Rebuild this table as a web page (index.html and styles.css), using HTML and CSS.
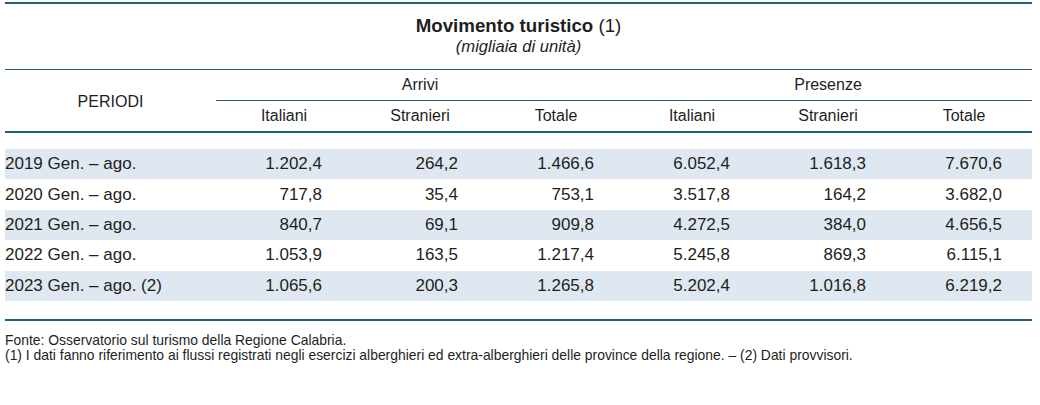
FILE: index.html
```html
<!DOCTYPE html>
<html lang="it">
<head>
<meta charset="utf-8">
<title>Movimento turistico</title>
<link rel="stylesheet" href="styles.css">
</head>
<body>
<div class="wrap">
  <div class="title-block">
    <div class="title"><b>Movimento turistico</b> (1)</div>
    <div class="subtitle">(migliaia di unità)</div>
  </div>
  <table class="data">
    <colgroup>
      <col class="c-first">
      <col class="c-num"><col class="c-num"><col class="c-num">
      <col class="c-num"><col class="c-num"><col class="c-num">
    </colgroup>
    <thead>
      <tr class="h1">
        <th rowspan="2" class="periodi">PERIODI</th>
        <th colspan="3" class="group">Arrivi</th>
        <th colspan="3" class="group">Presenze</th>
      </tr>
      <tr class="h2">
        <th>Italiani</th><th>Stranieri</th><th>Totale</th>
        <th>Italiani</th><th>Stranieri</th><th>Totale</th>
      </tr>
    </thead>
    <tbody>
      <tr class="spacer-top"><td colspan="7"></td></tr>
      <tr class="odd"><td>2019 Gen. – ago.</td><td>1.202,4</td><td>264,2</td><td>1.466,6</td><td>6.052,4</td><td>1.618,3</td><td>7.670,6</td></tr>
      <tr><td>2020 Gen. – ago.</td><td>717,8</td><td>35,4</td><td>753,1</td><td>3.517,8</td><td>164,2</td><td>3.682,0</td></tr>
      <tr class="odd"><td>2021 Gen. – ago.</td><td>840,7</td><td>69,1</td><td>909,8</td><td>4.272,5</td><td>384,0</td><td>4.656,5</td></tr>
      <tr><td>2022 Gen. – ago.</td><td>1.053,9</td><td>163,5</td><td>1.217,4</td><td>5.245,8</td><td>869,3</td><td>6.115,1</td></tr>
      <tr class="odd"><td>2023 Gen. – ago. (2)</td><td>1.065,6</td><td>200,3</td><td>1.265,8</td><td>5.202,4</td><td>1.016,8</td><td>6.219,2</td></tr>
      <tr class="spacer-bottom"><td colspan="7"></td></tr>
    </tbody>
  </table>
  <div class="notes">
    <p>Fonte: Osservatorio sul turismo della Regione Calabria.</p>
    <p>(1) I dati fanno riferimento ai flussi registrati negli esercizi alberghieri ed extra-alberghieri delle province della regione. – (2) Dati provvisori.</p>
  </div>
</div>
</body>
</html>
```

FILE: styles.css
```css
html, body {
  margin: 0;
  padding: 0;
  background: #ffffff;
}

body {
  font-family: "Liberation Sans", Arial, Helvetica, sans-serif;
  color: #1e1e1e;
}

.wrap {
  width: 1027px;
  margin-left: 5px;
  padding-top: 2px;
}

.title-block {
  border-top: 2px solid #22607a;
  border-bottom: 1px solid #22607a;
  padding: 12px 0 12px;
  text-align: center;
}

.title {
  font-size: 18.7px;
  line-height: 20px;
}

.title b {
  font-weight: bold;
}

.subtitle {
  font-size: 16.6px;
  line-height: 21px;
  font-style: italic;
}

.data {
  width: 1027px;
  border-collapse: collapse;
  table-layout: fixed;
}

.c-first { width: 211px; }
.c-num { width: 136px; }

.data th {
  font-weight: normal;
  font-size: 16px;
  padding: 0;
  text-align: center;
}

.h1 th {
  height: 30px;
}

.h1 .periodi {
  padding-top: 2px;
}

.h1 .group {
  border-bottom: 1px solid #22607a;
}

.h2 th {
  height: 30px;
}

.data thead {
  border-bottom: 2px solid #22607a;
}

.data td {
  font-size: 17px;
  padding: 0 30px 0 0;
  text-align: right;
  height: 30.4px;
}

.data td:first-child {
  text-align: left;
  padding: 0;
  white-space: nowrap;
}

.data tr.odd td {
  background: #dfe8f1;
}

.data tr.spacer-top td {
  height: 16px;
  padding: 0;
}

.data tr.spacer-bottom td {
  height: 18px;
  padding: 0;
}

.data tbody {
  border-bottom: 2px solid #22607a;
}

.notes {
  margin-top: 12px;
  font-size: 13.9px;
  line-height: 15px;
}

.notes p {
  margin: 0;
}
```
